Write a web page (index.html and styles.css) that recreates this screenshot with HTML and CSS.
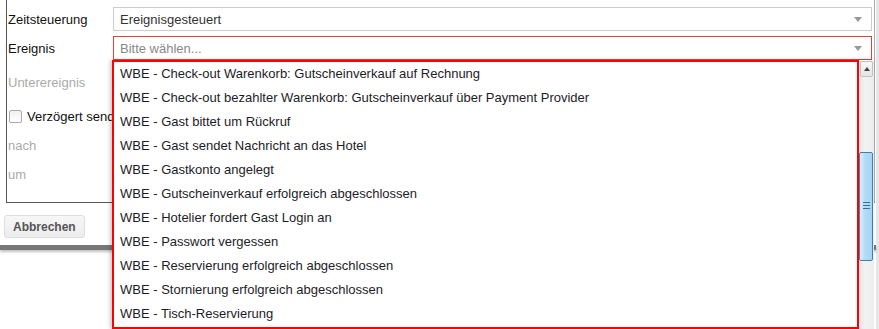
FILE: index.html
```html
<!DOCTYPE html>
<html lang="de">
<head>
  <meta charset="UTF-8" />
  <title>Zeitsteuerung</title>
  <link rel="stylesheet" href="styles.css">
</head>
<body>
  <div class="dialog">
    <div class="fieldset">
      <div class="row row-select">
        <span class="label">Zeitsteuerung</span>
        <div class="select">
          <span>Ereignisgesteuert</span>
          <span class="arrow"></span>
        </div>
      </div>
      <div class="row row-select">
        <span class="label">Ereignis</span>
        <div class="select select-error">
          <span class="placeholder">Bitte wählen...</span>
          <span class="arrow"></span>
        </div>
      </div>
      <div class="row row-tall">
        <span class="label muted">Unterereignis</span>
      </div>
      <div class="row row-tall">
        <label class="check">
          <input type="checkbox" />
          Verzögert senden
        </label>
      </div>
      <div class="row row-select">
        <span class="label muted">nach</span>
      </div>
      <div class="row row-select">
        <span class="label muted">um</span>
      </div>
    </div>

    <div class="footer">
      <button class="btn">Abbrechen</button>
    </div>
    <div class="dialog-edge"></div>

    <!-- open dropdown of the Ereignis select -->
    <div class="dropdown">
      <ul class="options">
        <li>WBE - Check-out Warenkorb: Gutscheinverkauf auf Rechnung</li>
        <li>WBE - Check-out bezahlter Warenkorb: Gutscheinverkauf über Payment Provider</li>
        <li>WBE - Gast bittet um Rückruf</li>
        <li>WBE - Gast sendet Nachricht an das Hotel</li>
        <li>WBE - Gastkonto angelegt</li>
        <li>WBE - Gutscheinverkauf erfolgreich abgeschlossen</li>
        <li>WBE - Hotelier fordert Gast Login an</li>
        <li>WBE - Passwort vergessen</li>
        <li>WBE - Reservierung erfolgreich abgeschlossen</li>
        <li>WBE - Stornierung erfolgreich abgeschlossen</li>
        <li>WBE - Tisch-Reservierung</li>
      </ul>
      <div class="scrollbar">
        <div class="scroll-up"></div>
        <div class="scroll-thumb">
          <span class="grip"></span>
        </div>
      </div>
    </div>
  </div>
</body>
</html>
```

FILE: styles.css
```css
/*
  ---------------------
  GLOBAL STYLES
  ---------------------
*/
* {
  margin: 0;
  padding: 0;
  box-sizing: border-box;
}
body {
  background: #fff;
  font-family: "Liberation Sans", Arial, sans-serif;
  font-size: 13px;
  color: #222;
  width: 879px;
  height: 329px;
  overflow: hidden;
}

.dialog {
  position: relative;
  width: 879px;
  height: 329px;
  border-right: 3px solid #e6e6e6;
}

/*
  ---------------------
  FIELDSET
  ---------------------
*/
.fieldset {
  margin-left: 6px;
  width: 869px;
  border: 1px solid #555;
  border-top: none;
  border-right-color: #aaa;
  padding: 7px 2px 16px 0;
  height: 203px;
}

.row {
  display: flex;
  align-items: center;
  padding-left: 1px;
}
.row-select {
  height: 24px;
  margin-bottom: 5px;
}
.row-tall {
  height: 34px;
}

.label {
  width: 105px;
  flex: none;
  color: #111;
}
.label.muted {
  color: #aaa;
}

.select {
  flex: 1;
  height: 24px;
  border: 1px solid #ccc;
  display: flex;
  align-items: center;
  justify-content: space-between;
  padding: 0 9px 0 6px;
  color: #333;
  background: #fff;
}
.select-error {
  border-color: #d9453a;
}
.placeholder {
  color: #888;
}
.arrow {
  width: 0;
  height: 0;
  border-left: 4px solid transparent;
  border-right: 4px solid transparent;
  border-top: 5px solid #999;
}

.check {
  display: flex;
  align-items: center;
  color: #111;
  padding-left: 1px;
}
.check input {
  -webkit-appearance: none;
  appearance: none;
  width: 13px;
  height: 13px;
  margin-right: 5px;
  border: 1px solid #aaa;
  border-radius: 2px;
  background: linear-gradient(#f0f0f0, #fff);
}

/*
  ---------------------
  FOOTER & BUTTON
  ---------------------
*/
.footer {
  padding: 12px 0 7px 4px;
}
.btn {
  height: 23px;
  padding: 0 8px;
  font-family: "Liberation Sans", Arial, sans-serif;
  font-size: 12px;
  font-weight: bold;
  color: #555;
  background: linear-gradient(#f7f7f7, #ececec);
  border: 1px solid #ddd;
  border-radius: 3px;
}

.dialog-edge {
  height: 5px;
  background: #777;
  box-shadow: 0 2px 3px rgba(0,0,0,0.25);
}

/*
  ---------------------
  DROPDOWN
  ---------------------
*/
.dropdown {
  position: absolute;
  top: 60px;
  left: 112px;
  width: 762px;
  height: 269px;
  display: flex;
  box-shadow: -2px 0 4px rgba(0,0,0,0.2);
}

.options {
  list-style: none;
  width: 747px;
  height: 269px;
  border: 2px solid #f00;
  background: #fff;
  padding-left: 6px;
}
.options li {
  height: 24px;
  line-height: 24px;
  white-space: nowrap;
  color: #1c1c28;
}

.scrollbar {
  width: 15px;
  height: 268px;
  margin-top: 1px;
  background: linear-gradient(to right, #e4e4e4, #f2f2f2 40%, #ececec);
  position: relative;
}
.scroll-up {
  height: 16px;
  margin: 0 1px 0 1px;
  border: 1px solid #c2c2c2;
  border-radius: 2px;
  background: linear-gradient(#f8f8f8, #e4e4e4);
  position: relative;
}
.scroll-up::after {
  content: '';
  position: absolute;
  top: 5px;
  left: 3px;
  border-left: 3px solid transparent;
  border-right: 3px solid transparent;
  border-bottom: 4px solid #444;
}
.scroll-thumb {
  position: absolute;
  top: 91px;
  left: 0;
  width: 14px;
  height: 109px;
  border: 1px solid #3c7fb1;
  border-radius: 2px;
  background: linear-gradient(to right, #d9effc, #b3dcf5 40%, #a6d4f2);
}
.grip {
  position: absolute;
  top: 49px;
  left: 3px;
  width: 7px;
  height: 7px;
  border-top: 1px solid #3c6e96;
  border-bottom: 1px solid #3c6e96;
}
.grip::after {
  content: '';
  position: absolute;
  top: 2px;
  left: 0;
  width: 7px;
  height: 1px;
  background: #3c6e96;
}
```
